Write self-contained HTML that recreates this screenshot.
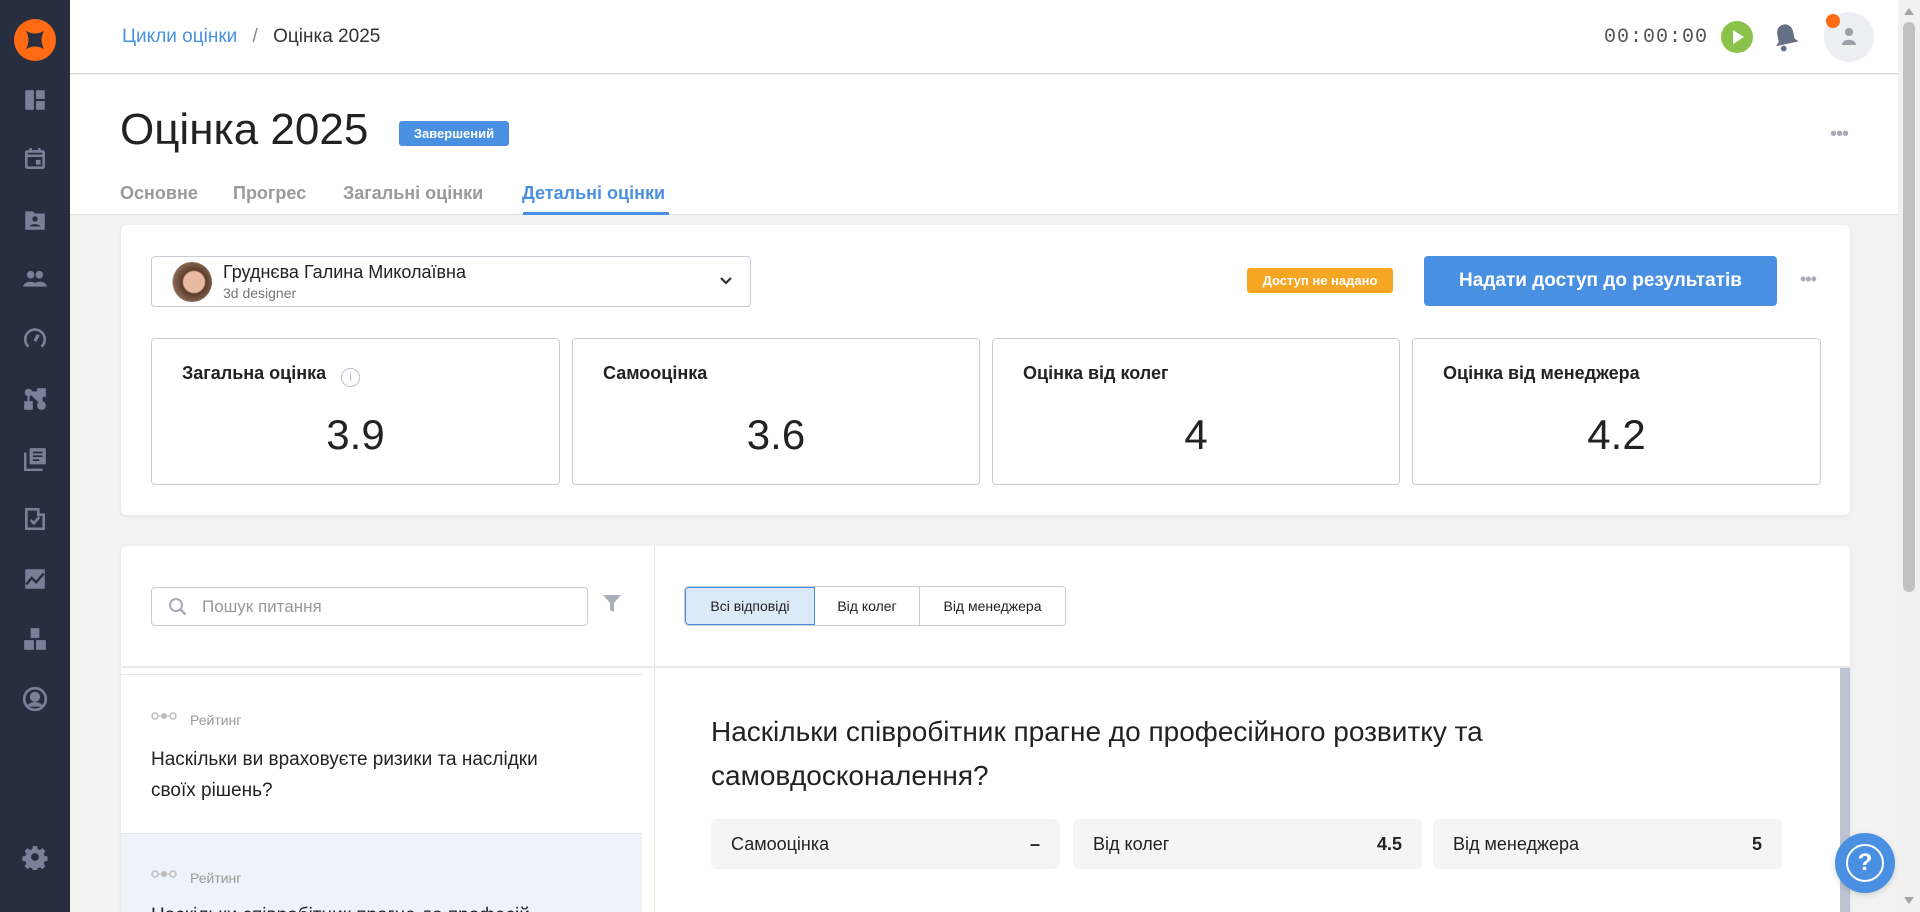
<!DOCTYPE html>
<html style="width:1920px;height:912px;overflow:hidden"><head><meta charset="utf-8"><style>
*{box-sizing:border-box;margin:0;padding:0}
body{width:1920px;height:912px;overflow:hidden;background:#f2f2f2;font-family:"Liberation Sans",sans-serif;color:#222;position:relative}
.abs{position:absolute}
.side{left:0;top:0;width:70px;height:912px;background:#272e3f}
.ic{position:absolute;left:22px;width:26px;height:26px}
.hdr{left:70px;top:0;width:1828px;height:74px;background:#fff;border-bottom:1px solid #d6d6d6}
.top2{left:70px;top:75px;width:1828px;height:140px;background:#fff;border-bottom:1px solid #ddd}
.card{background:#fff;border-radius:5px;box-shadow:0 1px 3px rgba(0,0,0,.08)}
.stat{position:absolute;top:338px;height:147px;border:1px solid #c9ced6;border-radius:4px;background:#fff}
.stat .t{position:absolute;left:30px;top:24px;font-size:18px;font-weight:bold;color:#222}
.stat .v{position:absolute;left:0;right:0;top:72px;text-align:center;font-size:42px;color:#222}
.ans{position:absolute;top:819px;height:50px;background:#f5f5f5;border-radius:5px;font-size:18px;line-height:50px;padding:0 20px}
.ans b{float:right}
</style></head><body>
<div class="abs side">
 <div class="abs" style="left:14px;top:19px;width:42px;height:42px;border-radius:50%;background:#ff6a13"></div>
 <svg class="abs" style="left:22px;top:27px" width="26" height="26" viewBox="0 0 26 26"><path d="M4 4 Q13 9 22 4 Q17 13 22 22 Q13 17 4 22 Q9 13 4 4Z" fill="#272e3f"/></svg>
 <svg class="ic" style="top:87px" viewBox="0 0 24 24" fill="#7b8099"><rect x="3" y="3" width="8" height="18"/><rect x="13" y="3" width="8" height="8"/><rect x="13" y="13" width="8" height="8"/></svg>
 <svg class="ic" style="top:146px" viewBox="0 0 24 24" fill="none" stroke="#7b8099" stroke-width="2.4"><rect x="4" y="5" width="16" height="15" rx="1"/><path d="M4 9h16M8 2v4M16 2v4"/><rect x="14" y="14" width="2" height="2" fill="#7b8099"/></svg>
 <svg class="ic" style="top:207px" viewBox="0 0 24 24" fill="#7b8099"><path d="M3 4h7l2 2h9v15H3z"/><circle cx="12" cy="11" r="2.5" fill="#272e3f"/><path d="M7 18c1-3 9-3 10 0z" fill="#272e3f"/></svg>
 <svg class="ic" style="top:266px" viewBox="0 0 24 24" fill="#7b8099"><circle cx="8" cy="8" r="3.5"/><circle cx="16" cy="8" r="3.5"/><path d="M1 19c1-6 13-6 14 0zM10 19c1-6 12-6 13 0z"/></svg>
 <svg class="ic" style="top:326px" viewBox="0 0 24 24" fill="none" stroke="#7b8099" stroke-width="2.4"><path d="M6 19A9 9 0 1 1 18 19"/><path d="M12 14l3-6" stroke-width="3"/></svg>
 <svg class="ic" style="top:386px" viewBox="0 0 24 24" fill="#7b8099"><circle cx="6" cy="6" r="3.5"/><rect x="14" y="2" width="8" height="8"/><rect x="2" y="14" width="8" height="8"/><circle cx="18" cy="18" r="4"/><path d="M6 6h12v12M6 6v8" stroke="#7b8099" stroke-width="2"/></svg>
 <svg class="ic" style="top:446px" viewBox="0 0 24 24" fill="#7b8099"><rect x="7" y="2" width="15" height="15" rx="1"/><path d="M10 6h9M10 9.5h9M10 13h6" stroke="#272e3f" stroke-width="1.6"/><path d="M3 6v16h16" fill="none" stroke="#7b8099" stroke-width="2.2"/></svg>
 <svg class="ic" style="top:506px" viewBox="0 0 24 24" fill="none" stroke="#7b8099" stroke-width="2.4"><path d="M4 3h11v5h5v13H4z"/><path d="M8 13l3 3 5-6"/></svg>
 <svg class="ic" style="top:566px" viewBox="0 0 24 24" fill="#7b8099"><path d="M3 3h18v18H3z"/><path d="M4 17l5-6 4 4 7-8" fill="none" stroke="#272e3f" stroke-width="2.2"/></svg>
 <svg class="ic" style="top:626px" viewBox="0 0 24 24" fill="#7b8099"><rect x="8" y="2" width="8" height="9"/><rect x="2" y="13" width="9" height="9"/><rect x="13" y="13" width="9" height="9"/></svg>
 <svg class="ic" style="top:686px" viewBox="0 0 24 24" fill="none" stroke="#7b8099" stroke-width="2.4"><circle cx="12" cy="12" r="10"/><circle cx="12" cy="10" r="3.5" fill="#7b8099"/><path d="M5.5 19c3-4 10-4 13 0" fill="#7b8099"/></svg>
 <svg class="ic" style="top:844px" viewBox="0 0 24 24" fill="#7b8099"><path d="M10 1h4l.6 3 2.4 1 2.6-1.7 2.8 2.8L20.7 8.7l1 2.4 3 .6v4l-3 .6-1 2.4 1.7 2.6-2.8 2.8-2.6-1.7-2.4 1-.6 3h-4l-.6-3-2.4-1-2.6 1.7-2.8-2.8 1.7-2.6-1-2.4-3-.6v-4l3-.6 1-2.4L1.6 6.1l2.8-2.8L7 5l2.4-1z" transform="scale(.92) translate(1,1)"/><circle cx="12" cy="12" r="3.6" fill="#272e3f"/></svg>
</div>

<div class="abs hdr">
 <div class="abs" style="left:52px;top:26px;font-size:19px;color:#4a90e2">Цикли оцінки <span style="color:#888;margin:0 10px">/</span> <span style="color:#333">Оцінка 2025</span></div>
 <div class="abs" style="left:1534px;top:26px;font-family:'Liberation Mono',monospace;font-size:20px;color:#555;letter-spacing:1px">00:00:00</div>
 <div class="abs" style="left:1651px;top:21px;width:32px;height:32px;border-radius:50%;background:#8bc34a"></div>
 <svg class="abs" style="left:1660px;top:28px" width="16" height="18"><path d="M3 2l11 7-11 7z" fill="#fff"/></svg>
 <svg class="abs" style="left:1702px;top:22px" width="28" height="30" viewBox="0 0 24 26"><path d="M12 2c4 0 7 3 7 8v6l3 3H2l3-3v-6c0-5 3-8 7-8z" fill="#657085" transform="rotate(-12 12 13)"/><circle cx="10" cy="23" r="2.5" fill="#657085"/></svg>
 <div class="abs" style="left:1754px;top:12px;width:50px;height:50px;border-radius:50%;background:#eceef1"></div>
 <svg class="abs" style="left:1770px;top:26px" width="18" height="20"><circle cx="9" cy="6" r="4" fill="#9aa0aa"/><path d="M2 19c0-7 14-7 14 0z" fill="#9aa0aa"/></svg>
 <div class="abs" style="left:1756px;top:14px;width:14px;height:14px;border-radius:50%;background:#ff6a13"></div>
</div>

<div class="abs top2">
 <div class="abs" style="left:50px;top:30px;font-size:44px;color:#222">Оцінка 2025</div>
 <div class="abs" style="left:329px;top:46px;width:110px;height:25px;background:#4a90e2;border-radius:3px;color:#fff;font-size:13px;font-weight:bold;text-align:center;line-height:25px">Завершений</div>
 <div class="abs" style="left:1760px;top:48px;color:#aab;font-size:20px;letter-spacing:-1px">•••</div>
 <div class="abs" style="left:50px;top:108px;font-size:18px;font-weight:bold;color:#9a9a9a;white-space:nowrap">
  <span class="abs" style="left:0">Основне</span><span class="abs" style="left:113px">Прогрес</span><span class="abs" style="left:223px">Загальні оцінки</span><span class="abs" style="left:402px;color:#4a90e2">Детальні оцінки</span></div>
 <div class="abs" style="left:453px;top:137px;width:146px;height:3px;background:#4a90e2"></div>
</div>

<div class="abs card" style="left:121px;top:225px;width:1729px;height:290px">
 <div class="abs" style="left:30px;top:31px;width:600px;height:51px;border:1px solid #c9ced6;border-radius:4px">
  <div class="abs" style="left:20px;top:5px;width:40px;height:40px;border-radius:50%;background:radial-gradient(circle at 55% 50%,#e6b9a0 0 35%,#5a3a2a 40%,#8a6a55 70%,#ccc 72%)"></div>
  <div class="abs" style="left:71px;top:5px;font-size:18px;color:#222">Груднєва Галина Миколаївна</div>
  <div class="abs" style="left:71px;top:28px;font-size:14px;color:#777">3d designer</div>
  <svg class="abs" style="left:567px;top:19px" width="14" height="10"><path d="M2 2l5 5 5-5" fill="none" stroke="#333" stroke-width="2.2"/></svg>
 </div>
 <div class="abs" style="left:1126px;top:43px;width:146px;height:25px;background:#f5a623;border-radius:3px;color:#fff;font-size:13px;font-weight:bold;text-align:center;line-height:25px">Доступ не надано</div>
 <div class="abs" style="left:1303px;top:31px;width:353px;height:50px;background:#4a90e2;border-radius:4px;color:#fff;font-size:19px;font-weight:bold;text-align:center;line-height:50px">Надати доступ до результатів</div>
 <div class="abs" style="left:1679px;top:44px;color:#aab;font-size:18px;letter-spacing:-1px">•••</div>
</div>
<div class="stat" style="left:151px;width:409px"><div class="t">Загальна оцінка <span style="display:inline-block;width:19px;height:19px;border:1.5px solid #b8c0cc;border-radius:50%;color:#b8c0cc;font-size:12px;text-align:center;line-height:16px;font-weight:normal;margin-left:10px;vertical-align:-2px">i</span></div><div class="v">3.9</div></div>
<div class="stat" style="left:572px;width:408px"><div class="t">Самооцінка</div><div class="v">3.6</div></div>
<div class="stat" style="left:992px;width:408px"><div class="t">Оцінка від колег</div><div class="v">4</div></div>
<div class="stat" style="left:1412px;width:409px"><div class="t">Оцінка від менеджера</div><div class="v">4.2</div></div>

<div class="abs card" style="left:121px;top:546px;width:1729px;height:366px;overflow:hidden;border-radius:5px 5px 0 0">
 <div class="abs" style="left:533px;top:0;width:1px;height:380px;background:#e6e6e6"></div>
 <div class="abs" style="left:0;top:120px;width:1729px;height:2px;background:#e8e8e8"></div>
 <div class="abs" style="left:30px;top:41px;width:437px;height:39px;border:1px solid #c9ced6;border-radius:4px">
  <svg class="abs" style="left:16px;top:9px" width="20" height="20"><circle cx="8" cy="8" r="6" fill="none" stroke="#aab" stroke-width="2"/><path d="M12.5 12.5l5 5" stroke="#aab" stroke-width="2.4"/></svg>
  <div class="abs" style="left:50px;top:9px;font-size:17px;color:#999">Пошук питання</div>
 </div>
 <svg class="abs" style="left:481px;top:48px" width="20" height="20"><path d="M1 1h18l-7 8v9l-4-2V9z" fill="#aab0bb"/></svg>
 <div class="abs" style="left:563px;top:40px;width:382px;height:40px;border:1px solid #c9ced6;border-radius:4px;font-size:14px;overflow:hidden">
  <div class="abs" style="left:0;top:0;width:130px;height:38px;background:#dce9f8;border:1px solid #4a90e2;border-radius:4px 0 0 4px;text-align:center;line-height:36px">Всі відповіді</div>
  <div class="abs" style="left:130px;top:0;width:105px;height:38px;border-right:1px solid #c9ced6;text-align:center;line-height:38px">Від колег</div>
  <div class="abs" style="left:235px;top:0;width:145px;height:38px;text-align:center;line-height:38px">Від менеджера</div>
 </div>
 <div class="abs" style="left:0;top:128px;width:521px;height:1px;background:#e6e6e6"></div>
 <svg class="abs" style="left:30px;top:165px" width="26" height="10"><circle cx="4" cy="5" r="3" fill="none" stroke="#bbb" stroke-width="1.5"/><circle cx="13" cy="5" r="3" fill="#bbb"/><circle cx="22" cy="5" r="3" fill="none" stroke="#bbb" stroke-width="1.5"/><path d="M7 5h3M16 5h3" stroke="#bbb"/></svg>
 <div class="abs" style="left:69px;top:166px;font-size:14px;color:#999">Рейтинг</div>
 <div class="abs" style="left:30px;top:198px;width:420px;font-size:19px;line-height:31px;color:#222">Наскільки ви враховуєте ризики та наслідки своїх рішень?</div>
 <div class="abs" style="left:0;top:287px;width:521px;height:100px;background:#edf3fb;border-top:1px solid #e0e6ee"></div>
 <svg class="abs" style="left:30px;top:323px" width="26" height="10"><circle cx="4" cy="5" r="3" fill="none" stroke="#bbb" stroke-width="1.5"/><circle cx="13" cy="5" r="3" fill="#bbb"/><circle cx="22" cy="5" r="3" fill="none" stroke="#bbb" stroke-width="1.5"/><path d="M7 5h3M16 5h3" stroke="#bbb"/></svg>
 <div class="abs" style="left:69px;top:324px;font-size:14px;color:#999">Рейтинг</div>
 <div class="abs" style="left:30px;top:354px;width:480px;font-size:19px;line-height:31px;color:#222;white-space:nowrap">Наскільки співробітник прагне до професій</div>
 <div class="abs" style="left:590px;top:164px;width:1000px;font-size:28px;line-height:44px;color:#222">Наскільки співробітник прагне до професійного розвитку та самовдосконалення?</div>
 <div class="abs" style="left:1719px;top:122px;width:10px;height:300px;background:#bcc3d2"></div>
</div>
<div class="ans" style="left:711px;width:349px">Самооцінка<b>–</b></div>
<div class="ans" style="left:1073px;width:349px">Від колег<b>4.5</b></div>
<div class="ans" style="left:1433px;width:349px">Від менеджера<b>5</b></div>

<div class="abs" style="left:1898px;top:0;width:22px;height:912px;background:#f1f1f1"></div>
<div class="abs" style="left:1903px;top:22px;width:12px;height:570px;background:#c1c1c1;border-radius:6px"></div>
<svg class="abs" style="left:1903px;top:6px" width="12" height="10"><path d="M1 9l5-7 5 7z" fill="#a3a3a3"/></svg>
<svg class="abs" style="left:1903px;top:896px" width="12" height="10"><path d="M1 1l5 7 5-7z" fill="#a3a3a3"/></svg>
<div class="abs" style="left:1835px;top:833px;width:60px;height:60px;border-radius:50%;background:#4a90e2;box-shadow:0 2px 6px rgba(0,0,0,.15)"></div>
<div class="abs" style="left:1846px;top:844px;width:38px;height:38px;border-radius:50%;border:2.5px solid #fff;color:#fff;font-size:24px;font-weight:bold;text-align:center;line-height:33px">?</div>
</body></html>
